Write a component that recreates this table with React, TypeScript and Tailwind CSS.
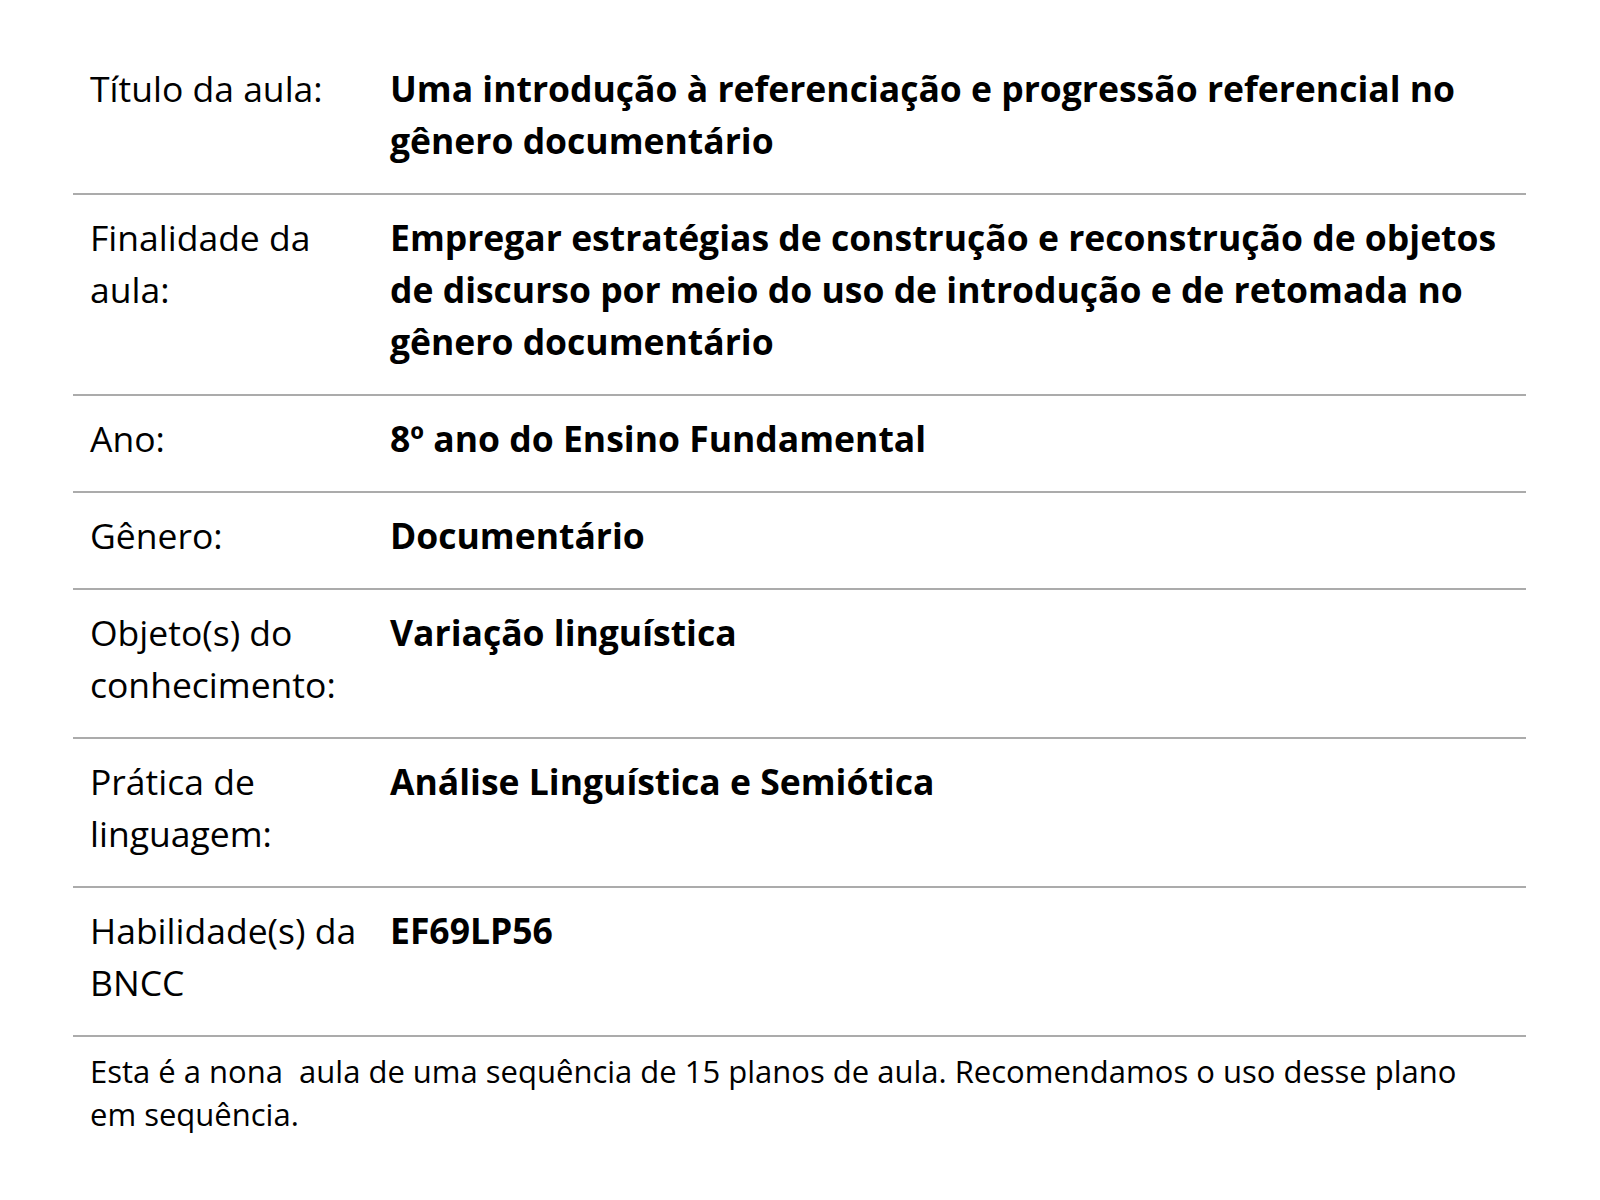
import React from "react";

const rows: { label: string; value: string }[] = [
  { label: "Título da aula:", value: "Uma introdução à referenciação e progressão referencial no gênero documentário" },
  { label: "Finalidade da aula:", value: "Empregar estratégias de construção e reconstrução de objetos de discurso por meio do uso de introdução e de retomada no gênero documentário" },
  { label: "Ano:", value: "8º ano do Ensino Fundamental" },
  { label: "Gênero:", value: "Documentário" },
  { label: "Objeto(s) do conhecimento:", value: "Variação linguística" },
  { label: "Prática de linguagem:", value: "Análise Linguística e Semiótica" },
  { label: "Habilidade(s) da BNCC", value: "EF69LP56" },
];

export default function App() {
  return (
    <div className="min-h-[1200px] w-[1600px] bg-white text-black [font-family:'Open_Sans',sans-serif]">
      <div className="ml-[73px] w-[1453px] pt-[46px]">
        {rows.map((r) => (
          <div key={r.label} className="flex border-b-2 border-[#ababab] pt-[17px] pb-[26.5px] text-[35.5px] leading-[51.75px]">
            <div className="w-[317px] shrink-0 pl-[17px] pr-[16px] font-normal">{r.label}</div>
            <div className="flex-1 pr-[17px] font-bold">{r.value}</div>
          </div>
        ))}
        <p className="pl-[17px] pr-[40px] pt-[13px] text-[31px] leading-[43px]">
          Esta é a nona&nbsp; aula de uma sequência de 15 planos de aula. Recomendamos o uso desse plano em sequência.
        </p>
      </div>
    </div>
  );
}
